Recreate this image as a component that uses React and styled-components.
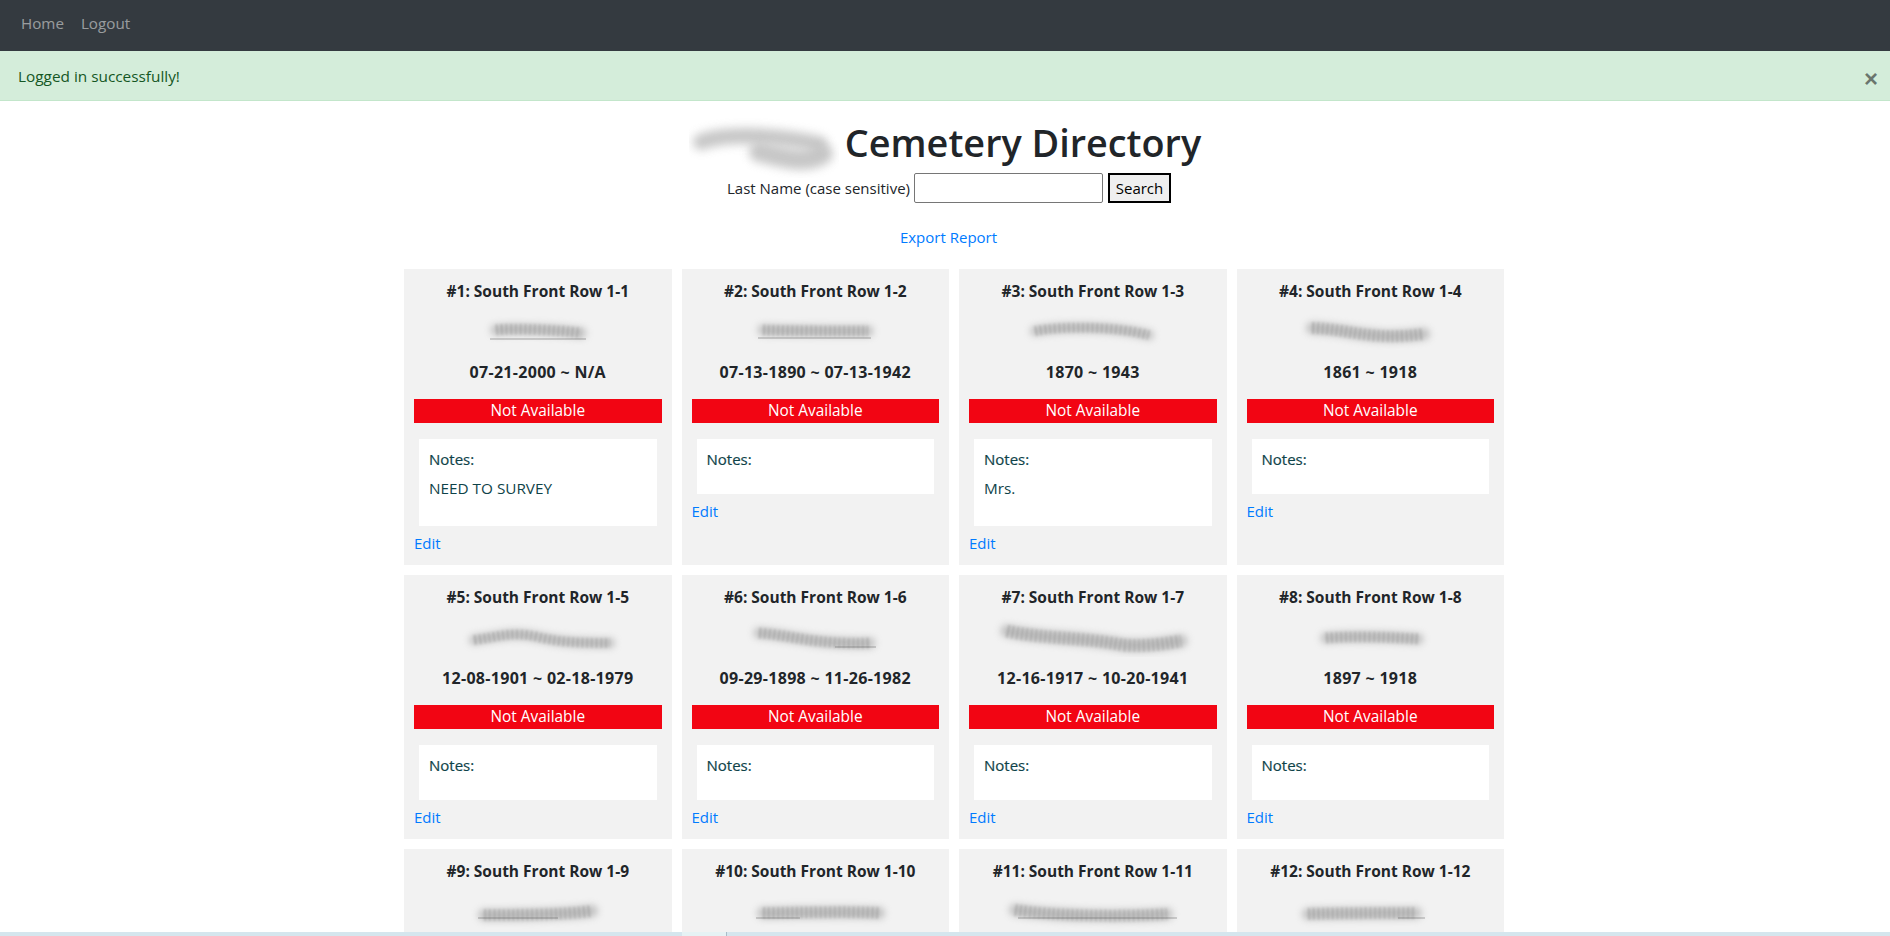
import React from 'react'
import styled, { createGlobalStyle } from 'styled-components'

const GlobalStyle = createGlobalStyle`
  * {
    box-sizing: border-box;
  }

  html, body {
    margin: 0;
    height: 936px;
    overflow: hidden;
    background: #fff;
    color: #212529;
    font-family: "Open Sans", "Noto Sans", sans-serif;
    font-size: 15px;
    line-height: 24px;
  }
`

const Navbar = styled.nav`
  display: flex;
  align-items: center;
  gap: 17px;
  height: 51px;
  padding: 0 0 5px 21px;
  background: #343a40;
`

const NavLink = styled.a`
  color: rgba(255, 255, 255, 0.5);
  font-size: 15.2px;
`

const Alert = styled.div`
  display: flex;
  align-items: center;
  justify-content: space-between;
  height: 50px;
  padding: 0 12px 0 18px;
  background: #d4edda;
  border-bottom: 1px solid #c3e6cb;
  color: #155724;
  font-size: 15.35px;
`

const CloseButton = styled.button`
  padding: 0;
  border: 0;
  margin-top: 7px;
  background: transparent;
  color: rgba(0, 0, 0, 0.5);
  font-family: "Liberation Sans", sans-serif;
  font-size: 24px;
  font-weight: 700;
  line-height: 24px;
`

const Heading = styled.div`
  display: flex;
  justify-content: center;
  align-items: center;
  gap: 6px;
  height: 72px;
`

const HeadingSmear = styled.svg`
  width: 150px;
  height: 60px;
  margin-top: 22px;
`

const HeadingBlur = styled.path`
  fill: none;
  stroke: #bdbdbd;
  stroke-linecap: round;
  opacity: 0.85;
  filter: blur(5px);
`

const Title = styled.h1`
  margin: 12px 0 0;
  color: #212529;
  font-size: 37.8px;
  font-weight: 600;
  line-height: 48px;
`

const SearchForm = styled.form`
  display: flex;
  justify-content: center;
  align-items: center;
  gap: 4px;
  height: 30px;
  padding-left: 8px;
`

const SearchInput = styled.input`
  width: 189px;
  height: 30px;
  margin-right: 1px;
  border: 1px solid #767676;
  border-radius: 2px;
  background: #fff;
`

const SearchButton = styled.button`
  width: 63px;
  height: 30px;
  padding: 0;
  border: 2px solid #000;
  background: #efefef;
  color: #000;
  font-family: inherit;
  font-size: 15px;
`

const ExportRow = styled.div`
  height: 24px;
  margin-top: 22px;
  padding-left: 7px;
  text-align: center;
`

const Link = styled.a`
  color: #007bff;
`

const CardGrid = styled.div`
  display: grid;
  grid-template-columns: repeat(4, 1fr);
  gap: 10px;
  width: 1100px;
  margin: 20px 0 0 404px;
`

const Card = styled.div`
  display: flex;
  flex-direction: column;
  min-height: 100px;
  padding: 10px;
  background: #f2f2f2;
`

const CardHeading = styled.h5`
  margin: 0;
  color: #212529;
  font-size: 15.5px;
  font-weight: 700;
  line-height: 24px;
  text-align: center;
`

const DateLine = styled(CardHeading)`
  font-size: 16px;
  letter-spacing: 0.3px;
`

const SmearBox = styled.svg`
  display: block;
  align-self: center;
  width: 240px;
  height: 40px;
  margin: 8px 0 9px;
`

const Status = styled.div`
  height: 24px;
  margin-top: 15px;
  background: #f20513;
  color: #fff;
  font-size: 15.4px;
  text-align: center;
`

const Notes = styled.div`
  margin: 16px 5px 5px;
  padding: 8px 10px 0;
  min-height: ${props => (props.$hasText ? '87px' : '55px')};
  background: #fff;
  color: #0f4349;
  font-size: 15.3px;
`

const NotesLabel = styled.div`
  font-size: 15px;
  font-weight: 500;
  -webkit-text-stroke: 0.2px #0f4349;
`

const NotesText = styled.div`
  margin-top: 5px;
`

const SmearBlur = styled.path`
  fill: none;
  stroke: #8f8f8f;
  stroke-linecap: round;
  opacity: 0.5;
  filter: blur(3.5px);
`

const SmearStripes = styled.path`
  fill: none;
  stroke: #777;
  stroke-dasharray: 2.5 2.2;
  opacity: 0.3;
  filter: blur(1.1px);
`

const SmearStreak = styled.path`
  fill: none;
  stroke: #666;
  stroke-width: 1;
  opacity: 0.55;
  filter: blur(0.4px);
`

const BottomStrip = styled.div`
  position: fixed;
  left: 0;
  right: 0;
  bottom: 0;
  height: 4px;
  background: linear-gradient(
    to right,
    #d5e6ee 0,
    #d5e6ee 682px,
    #e6f2f4 682px,
    #e6f2f4 726px,
    #a9bcc8 726px,
    #a9bcc8 727px,
    #d5e6ee 727px
  );
`

const Smear = ({ d, width = 13, streak }) => (
  <SmearBox viewBox='-120 0 240 40'>
    <SmearBlur d={d} strokeWidth={width} />
    <SmearStripes d={d} strokeWidth={width} />
    {streak && <SmearStreak d={streak} />}
  </SmearBox>
)

const plots = [
  { id: 1, place: '1-1', dates: '07-21-2000 ~ N/A', note: 'NEED TO SURVEY', smear: 'M-42 19 C-25 17 20 19 43 22', w: 11, streak: 'M-48 28 H48' },
  { id: 2, place: '1-2', dates: '07-13-1890 ~ 07-13-1942', smear: 'M-52 19 C-20 20 20 20 53 20', w: 11, streak: 'M-57 27 H56' },
  { id: 3, place: '1-3', dates: '1870 ~ 1943', note: 'Mrs.', smear: 'M-58 20 C-30 15 20 15 56 24', w: 10 },
  { id: 4, place: '1-4', dates: '1861 ~ 1918', smear: 'M-58 17 C-20 18 0 30 54 23', w: 12 },
  { id: 5, place: '1-5', dates: '12-08-1901 ~ 02-18-1979', smear: 'M-64 23 C-40 20 -25 14 0 20 C25 26 50 26 72 26', w: 10 },
  { id: 6, place: '1-6', dates: '09-29-1898 ~ 11-26-1982', smear: 'M-56 16 C-25 18 0 28 55 26', w: 11, streak: 'M20 30 H61' },
  { id: 7, place: '1-7', dates: '12-16-1917 ~ 10-20-1941', smear: 'M-86 14 C-50 22 -10 20 30 28 C55 30 75 26 88 24', w: 13 },
  { id: 8, place: '1-8', dates: '1897 ~ 1918', smear: 'M-44 21 C-20 19 20 20 48 22', w: 11 },
  { id: 9, place: '1-9', smear: 'M-54 24 C-25 24 25 24 54 20', w: 12, streak: 'M-60 27 H20' },
  { id: 10, place: '1-10', smear: 'M-52 22 C-20 22 30 20 64 22', w: 12, streak: 'M-59 27 H-15' },
  { id: 11, place: '1-11', smear: 'M-78 19 C-40 25 30 26 74 23', w: 12, streak: 'M-75 27 H84' },
  { id: 12, place: '1-12', smear: 'M-62 23 C-30 22 20 22 46 22', w: 12, streak: 'M28 27 H55' }
]

const App = () => (
  <React.Fragment>
    <GlobalStyle />
    <Navbar>
      <NavLink>Home</NavLink>
      <NavLink>Logout</NavLink>
    </Navbar>
    <Alert>
      <span>Logged in successfully!</span>
      <CloseButton type='button'>×</CloseButton>
    </Alert>
    <Heading>
      <HeadingSmear viewBox='0 0 150 60'>
        <HeadingBlur d='M12 24 C40 14 90 18 130 26' strokeWidth={16} />
        <HeadingBlur d='M70 34 C90 38 115 48 134 36' strokeWidth={20} />
      </HeadingSmear>
      <Title>Cemetery Directory</Title>
    </Heading>
    <SearchForm>
      <label>Last Name (case sensitive)</label>
      <SearchInput type='text' />
      <SearchButton type='button'>Search</SearchButton>
    </SearchForm>
    <ExportRow>
      <Link>Export Report</Link>
    </ExportRow>
    <CardGrid>
      {plots.map(p =>
        <Card key={p.id}>
          <CardHeading>#{p.id}: South Front Row {p.place}</CardHeading>
          <Smear d={p.smear} width={p.w} streak={p.streak} />
          {p.dates && <DateLine>{p.dates}</DateLine>}
          {p.dates && <Status>Not Available</Status>}
          {p.dates &&
            <Notes $hasText={!!p.note}>
              <NotesLabel>Notes:</NotesLabel>
              {p.note && <NotesText>{p.note}</NotesText>}
            </Notes>
          }
          {p.dates && <div><Link>Edit</Link></div>}
        </Card>
      )}
    </CardGrid>
    <BottomStrip />
  </React.Fragment>
)

export default App
